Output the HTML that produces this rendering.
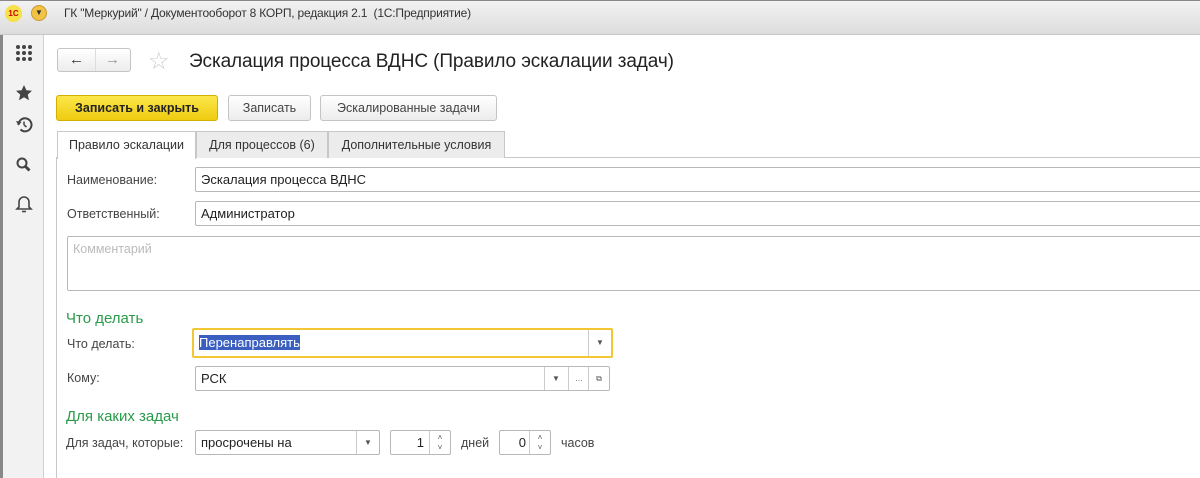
<!DOCTYPE html><html><head><meta charset="utf-8"><style>
body{margin:0;width:1200px;height:478px;overflow:hidden;background:#fff;font-family:"Liberation Sans",Arial,sans-serif;font-size:12px;color:#333;position:relative}
.a{position:absolute}
.fld{position:absolute;border:1px solid #b8b8b8;border-radius:2px;background:#fff;box-sizing:border-box;padding-left:5px;font-size:13px;color:#222;line-height:23px}
.lbl{position:absolute;font-size:12.5px;color:#444}
.btn{position:absolute;border:1px solid #c4c4c4;border-radius:3px;background:linear-gradient(#fff,#ececec);box-sizing:border-box;text-align:center;font-size:12.5px;color:#444;line-height:25px}
.tab{position:absolute;top:131px;height:27px;box-sizing:border-box;border:1px solid #c8c8c8;border-bottom:none;background:#ececec;font-size:12.5px;color:#333;line-height:26px;text-align:center}
.grp{position:absolute;color:#2a9a4a;font-size:15px}
.dd{position:absolute;top:0;bottom:0;border-left:1px solid #ccc;width:22px;text-align:center;font-size:8px;color:#555;line-height:23px}
</style></head><body>
<div class="a" style="left:0;top:0;width:1200px;height:35px;background:linear-gradient(#f2f2f2,#dcdcdc);border-top:1px solid #888;border-bottom:1px solid #c8c8c8;box-sizing:border-box"></div>
<div class="a" style="left:5px;top:5px;width:17px;height:17px;border-radius:50%;background:#f7e04a;color:#c00;font-size:8px;font-weight:bold;text-align:center;line-height:17px">1С</div>
<div class="a" style="left:31px;top:5px;width:16px;height:16px;border-radius:50%;background:#f2c244;border:1px solid #c99a2e;box-sizing:border-box;font-size:8px;text-align:center;line-height:14px;color:#333">▼</div>
<div class="a" style="left:64px;top:6px;font-size:12px;color:#333;letter-spacing:-0.2px">ГК "Меркурий" / Документооборот 8 КОРП, редакция 2.1 &nbsp;(1С:Предприятие)</div>
<div class="a" style="left:0;top:35px;width:43px;height:443px;background:#f2f2f2;border-right:1px solid #d0d0d0"></div>
<div class="a" style="left:0;top:35px;width:3px;height:443px;background:#888"></div>
<svg class="a" style="left:0;top:35px" width="43" height="190" fill="#444" stroke="#444">
<g stroke="none"><circle cx="18" cy="12" r="2"/><circle cx="24" cy="12" r="2"/><circle cx="30" cy="12" r="2"/><circle cx="18" cy="18" r="2"/><circle cx="24" cy="18" r="2"/><circle cx="30" cy="18" r="2"/><circle cx="18" cy="24" r="2"/><circle cx="24" cy="24" r="2"/><circle cx="30" cy="24" r="2"/>
<path d="M24 50l2.4 5.2 5.6.6-4.2 3.8 1.2 5.6-5-2.9-5 2.9 1.2-5.6-4.2-3.8 5.6-.6z"/></g>
<g fill="none" stroke-width="2"><path d="M18.5 90a6.5 6.5 0 1 1 2 4.5"/><path d="M24 90v-3.5M24 90l2.5 2" stroke-width="1.5"/>
<circle cx="22" cy="128" r="4.5"/><path d="M25.5 131.5l4 4" stroke-width="3"/>
<path d="M19 172v-5a5 5 0 0 1 10 0v5l2 2h-14z" stroke-width="1.6"/><path d="M22 176.5h4" stroke-width="1.6"/></g>
<path d="M16 86l2.5 4.5 3-3.5z" stroke="none"/>
</svg>
<div class="a" style="left:56px;top:158px;width:1px;height:320px;background:#c8c8c8"></div>
<div class="btn" style="left:57px;top:48px;width:74px;height:24px;line-height:22px;font-size:15px;color:#333"><span style="display:inline-block;width:36px;border-right:1px solid #ddd">←</span><span style="display:inline-block;width:34px;color:#999">→</span></div>
<div class="a" style="left:148px;top:47px;font-size:24px;color:#ccc">☆</div>
<div class="a" style="left:189px;top:51px;font-size:19px;color:#222;letter-spacing:-0.1px">Эскалация процесса ВДНС (Правило эскалации задач)</div>
<div class="btn" style="left:56px;top:95px;width:162px;height:26px;background:linear-gradient(#fbe64a,#efcc10);border-color:#d1b000;color:#222;font-weight:bold">Записать и закрыть</div>
<div class="btn" style="left:228px;top:95px;width:83px;height:26px">Записать</div>
<div class="btn" style="left:320px;top:95px;width:177px;height:26px">Эскалированные задачи</div>
<div class="a" style="left:56px;top:157px;width:1144px;height:1px;background:#c8c8c8"></div>
<div class="tab" style="left:57px;width:139px;background:#fff;height:28px">Правило эскалации</div>
<div class="tab" style="left:196px;width:132px">Для процессов (6)</div>
<div class="tab" style="left:328px;width:177px">Дополнительные условия</div>
<div class="lbl" style="left:67px;top:173px">Наименование:</div>
<div class="fld" style="left:195px;top:167px;width:1010px;height:25px">Эскалация процесса ВДНС</div>
<div class="lbl" style="left:67px;top:207px">Ответственный:</div>
<div class="fld" style="left:195px;top:201px;width:1010px;height:25px">Администратор</div>
<div class="fld" style="left:67px;top:236px;width:1140px;height:55px;color:#bbb;font-size:12.5px;line-height:24px">Комментарий</div>
<div class="grp" style="left:66px;top:310px">Что делать</div>
<div class="lbl" style="left:67px;top:337px">Что делать:</div>
<div class="fld" style="left:192px;top:328px;width:421px;height:30px;border:2px solid #f2c634;line-height:26px;padding-left:5px"><span style="background:#3b5fc0;color:#fff">Перенаправлять</span><div class="dd" style="right:0;line-height:26px">▼</div></div>
<div class="lbl" style="left:67px;top:371px">Кому:</div>
<div class="fld" style="left:195px;top:366px;width:415px;height:25px">РСК<div class="dd" style="right:42px">▼</div><div class="dd" style="right:20px;width:20px">…</div><div class="dd" style="right:0;width:20px">⧉</div></div>
<div class="grp" style="left:66px;top:408px">Для каких задач</div>
<div class="lbl" style="left:66px;top:436px">Для задач, которые:</div>
<div class="fld" style="left:195px;top:430px;width:185px;height:25px">просрочены на<div class="dd" style="right:0">▼</div></div>
<div class="fld" style="left:390px;top:430px;width:61px;height:25px;text-align:right;padding-right:26px">1<div class="dd" style="right:0;width:20px;line-height:10px;padding-top:2px">˄<br>˅</div></div>
<div class="lbl" style="left:461px;top:436px">дней</div>
<div class="fld" style="left:499px;top:430px;width:52px;height:25px;text-align:right;padding-right:24px">0<div class="dd" style="right:0;width:20px;line-height:10px;padding-top:2px">˄<br>˅</div></div>
<div class="lbl" style="left:561px;top:436px">часов</div>
</body></html>
